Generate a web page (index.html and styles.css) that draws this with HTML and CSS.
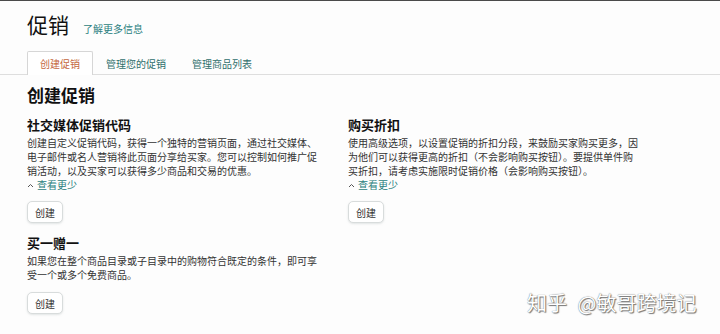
FILE: index.html
```html
<!DOCTYPE html>
<html lang="zh-CN">
<head>
  <meta charset="UTF-8">
  <title>促销</title>
  <meta name="viewport" content="width=device-width, initial-scale=1">
  <link rel="stylesheet" href="styles.css">
</head>
<body>
  <header class="page-head">
    <h1>促销</h1>
    <a class="link" href="#">了解更多信息</a>
  </header>

  <nav class="tabs">
    <a class="tab active" href="#">创建促销</a>
    <a class="tab" href="#">管理您的促销</a>
    <a class="tab" href="#">管理商品列表</a>
  </nav>

  <main class="content">
    <h2>创建促销</h2>
    <div class="grid">
      <section class="card">
        <h3>社交媒体促销代码</h3>
        <p>创建自定义促销代码，获得一个独特的营销页面，通过社交媒体、电子邮件或名人营销将此页面分享给买家。您可以控制如何推广促销活动，以及买家可以获得多少商品和交易的优惠。</p>
        <div class="toggle">
          <svg width="7" height="5" viewBox="0 0 7 5"><path d="M1 4 L3.5 1.5 L6 4" fill="none" stroke="#555" stroke-width="1"/></svg>
          <a class="link" href="#">查看更少</a>
        </div>
        <button class="btn">创建</button>
      </section>

      <section class="card">
        <h3>购买折扣</h3>
        <p>使用高级选项，以设置促销的折扣分段，来鼓励买家购买更多，因为他们可以获得更高的折扣（不会影响购买按钮）。要提供单件购买折扣，请考虑实施限时促销价格（会影响购买按钮）。</p>
        <div class="toggle">
          <svg width="7" height="5" viewBox="0 0 7 5"><path d="M1 4 L3.5 1.5 L6 4" fill="none" stroke="#555" stroke-width="1"/></svg>
          <a class="link" href="#">查看更少</a>
        </div>
        <button class="btn">创建</button>
      </section>

      <section class="card">
        <h3>买一赠一</h3>
        <p>如果您在整个商品目录或子目录中的购物符合既定的条件，即可享受一个或多个免费商品。</p>
        <button class="btn">创建</button>
      </section>
    </div>
  </main>

  <div class="watermark">知乎 @敏哥跨境记</div>
</body>
</html>
```

FILE: styles.css
```css
body {
  margin: 0;
  padding: 0 27px;
  border-top: 1px solid #4a4a4a;
  background: #fdfdfd;
  color: #222;
  font-family: "Noto Sans CJK SC", "Noto Sans", sans-serif;
  height: 333px;
  overflow: hidden;
}
a {
  text-decoration: none;
}
.link {
  color: #2b7f80;
}
.page-head {
  display: flex;
  align-items: baseline;
  gap: 14px;
  padding-top: 11px;
}
.page-head h1 {
  margin: 0;
  font-size: 21px;
  line-height: 24px;
  font-weight: 400;
  color: #111;
}
.page-head .link {
  font-size: 10px;
}
.tabs {
  display: flex;
  margin: 15px -27px 0;
  padding: 0 27px;
  border-bottom: 1px solid #dedede;
}
.tab {
  padding: 0 12px;
  font-size: 10px;
  line-height: 23px;
  color: #2f6f6c;
  border: 1px solid transparent;
  border-bottom: none;
  margin-bottom: -1px;
}
.tab.active {
  color: #c4673d;
  border-color: #d6d6d6;
  background: #fff;
  border-radius: 2px 2px 0 0;
}
.content h2 {
  margin: 10px 0 12px;
  font-size: 17px;
  line-height: 20px;
  font-weight: 700;
  color: #111;
}
.grid {
  display: grid;
  grid-template-columns: 321px 321px;
  row-gap: 12px;
}
.card h3 {
  margin: 0 0 3px;
  font-size: 13px;
  line-height: 16px;
  font-weight: 700;
  color: #111;
}
.card p {
  margin: 0;
  width: 292px;
  font-size: 10px;
  line-height: 14px;
  color: #333;
}
.toggle {
  display: flex;
  align-items: center;
  gap: 3px;
  font-size: 10px;
  line-height: 14px;
}
.btn {
  display: block;
  margin-top: 9px;
  height: 22px;
  padding: 0 7px;
  font-family: inherit;
  font-size: 10px;
  color: #333;
  background: #fff;
  border: 1px solid #d8dcdc;
  border-radius: 5px;
  box-shadow: 0 1px 2px rgba(200, 205, 205, 0.5);
}
.card:last-child .btn {
  margin-top: 10px;
}
.watermark {
  position: absolute;
  left: 527px;
  top: 290px;
  font-size: 20px;
  line-height: 26px;
  color: #fff;
  word-spacing: 6px;
  text-shadow: 0 0 1px #555, 1px 1px 1px #777;
}
```
